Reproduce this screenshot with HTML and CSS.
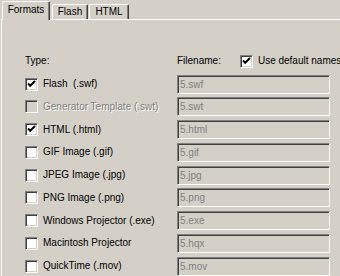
FILE: index.html
```html
<!DOCTYPE html>
<html lang="en">
<head>
    <meta charset="UTF-8">
    <title>Publish Settings</title>
    <link rel="stylesheet" href="styles.css">
</head>
<body>

    <div class="dialog">
        <div class="tabs">
            <div class="tab active">Formats</div>
            <div class="tab tab-flash">Flash</div>
            <div class="tab tab-html">HTML</div>
        </div>

        <div class="panel">
            <div class="grid">
                <div class="row"><span class="label">Type:</span></div>
                <div class="row">
                    <span class="label">Filename:</span>
                    <span class="cb checked use-default"><svg viewBox="0 0 11 11"><path d="M2 4.5 L4.2 6.8 L9 2" /></svg></span>
                    <span class="label">Use default names</span>
                </div>

                <div class="row"><span class="cb checked"><svg viewBox="0 0 11 11"><path d="M2 4.5 L4.2 6.8 L9 2" /></svg></span><span class="label">Flash &nbsp;(.swf)</span></div>
                <div class="row"><div class="field">5.swf</div></div>

                <div class="row"><span class="cb disabled"></span><span class="label disabled">Generator Template (.swt)</span></div>
                <div class="row"><div class="field">5.swt</div></div>

                <div class="row"><span class="cb checked"><svg viewBox="0 0 11 11"><path d="M2 4.5 L4.2 6.8 L9 2" /></svg></span><span class="label">HTML (.html)</span></div>
                <div class="row"><div class="field">5.html</div></div>

                <div class="row"><span class="cb"></span><span class="label">GIF Image (.gif)</span></div>
                <div class="row"><div class="field">5.gif</div></div>

                <div class="row"><span class="cb"></span><span class="label">JPEG Image (.jpg)</span></div>
                <div class="row"><div class="field">5.jpg</div></div>

                <div class="row"><span class="cb"></span><span class="label">PNG Image (.png)</span></div>
                <div class="row"><div class="field">5.png</div></div>

                <div class="row"><span class="cb"></span><span class="label">Windows Projector (.exe)</span></div>
                <div class="row"><div class="field">5.exe</div></div>

                <div class="row"><span class="cb"></span><span class="label">Macintosh Projector</span></div>
                <div class="row"><div class="field">5.hqx</div></div>

                <div class="row"><span class="cb"></span><span class="label">QuickTime (.mov)</span></div>
                <div class="row"><div class="field">5.mov</div></div>
            </div>
        </div>
    </div>

</body>
</html>
```

FILE: styles.css
```css
body {
    margin: 0;
    background-color: #d4d0c8;
    font-family: "Liberation Sans", Arial, sans-serif;
    font-size: 10px;
    color: #000;
    overflow: hidden;
}
.dialog {
    margin-left: 1px;
}
/* Tab strip */
.tabs {
    display: flex;
    align-items: flex-end;
    height: 19px;
    padding-left: 1px;
}
.tab {
    box-sizing: border-box;
    height: 15px;
    padding-top: 1px;
    line-height: 12px;
    text-align: center;
    border: 1px solid;
    border-bottom: none;
    border-color: #fff #404040 transparent #fff;
    box-shadow: inset -1px 0 #808080;
    border-radius: 2px 2px 0 0;
    background-color: #d4d0c8;
}
.tab.active {
    position: relative;
    z-index: 1;
    width: 48px;
    height: 19px;
    margin-bottom: -1px;
    margin-right: 2px;
    padding-top: 2px;
}
.tab-flash {
    width: 36px;
    margin-right: 1px;
}
.tab-html {
    width: 40px;
}
/* Panel */
.panel {
    box-sizing: border-box;
    height: 257px;
    overflow: hidden;
    border-top: 1px solid #fff;
    border-left: 1px solid #fff;
    padding: 30px 0 0 23px;
}
.grid {
    display: grid;
    grid-template-columns: 152px 153px;
    grid-auto-rows: 22.75px;
}
.row {
    display: flex;
    align-items: center;
}
.label {
    line-height: 12px;
    white-space: nowrap;
}
.label.disabled {
    color: #808080;
    text-shadow: 1px 1px #fff;
}
.cb {
    box-sizing: border-box;
    width: 13px;
    height: 13px;
    margin-right: 5px;
    flex-shrink: 0;
    background-color: #fff;
    border: 1px solid;
    border-color: #808080 #fff #fff #808080;
    box-shadow: inset 1px 1px #404040, inset -1px -1px #d4d0c8;
}
.cb svg {
    display: block;
    width: 11px;
    height: 11px;
}
.cb svg path {
    fill: none;
    stroke: #000;
    stroke-width: 2;
}
.cb.disabled {
    background-color: #d4d0c8;
}
.use-default {
    margin-left: 19px;
}
.field {
    box-sizing: border-box;
    width: 153px;
    height: 19px;
    padding-left: 2px;
    line-height: 17px;
    color: #808080;
    background-color: #d4d0c8;
    border: 1px solid;
    border-color: #808080 #fff #fff #808080;
    box-shadow: inset 1px 1px #404040, inset -1px -1px #d4d0c8;
}
```
